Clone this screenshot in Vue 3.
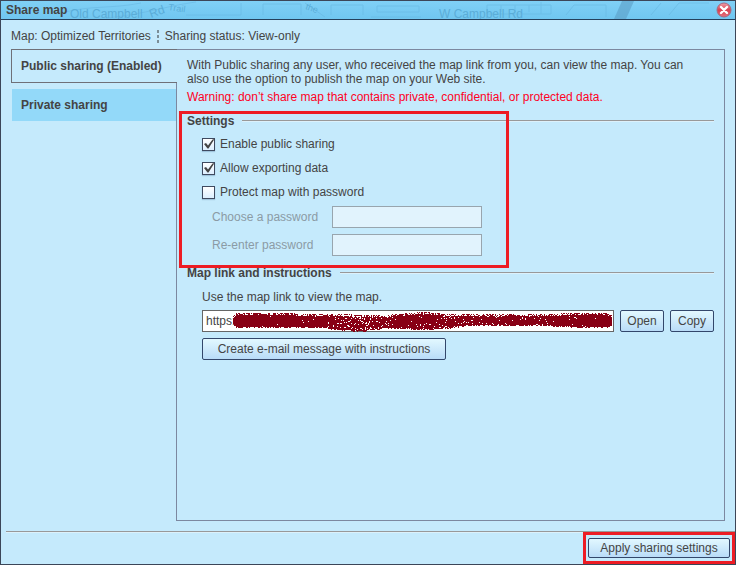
<template>
  <div class="dialog">
    <header class="title-bar">
      <svg class="map-strip" width="734" height="18" aria-hidden="true">
        <g class="map-roads">
          <path d="M60 12c30-8 50-4 80-10M105 17c40-4 60-12 90-16M185 14h55V2M262 14V3h38v11M330 14V4h32v10M370 16h50M486 13V4h64v9zM500 4v7M514 4v7M528 4v7M540 13V1" />
          <path d="M565 14l8-10h32v12M650 14l10-12M668 14l10-12h30M304 2l20 14M376 5h42v6h-42z" />
        </g>
        <path d="M621 0h12l-8 18h-12z" fill="#5b9fc6" opacity="0.6" />
        <g class="map-text">
          <text x="69" y="17">Old Campbell</text>
          <text x="150" y="17" transform="rotate(-20 150 17)">Rd</text>
          <text x="167" y="9" transform="rotate(8 167 9)" class="small">Trail</text>
          <text x="438" y="17">W Campbell Rd</text>
          <text x="304" y="8" transform="rotate(20 304 8)" class="small">the</text>
        </g>
      </svg>
      <h1>Share map</h1>
      <button class="close-btn" type="button" aria-label="Close">
        <svg width="16" height="16" viewBox="0 0 16 16">
          <defs>
            <linearGradient id="close-fill" x1="0" y1="0" x2="0" y2="1">
              <stop offset="0" stop-color="#f0a0a8" />
              <stop offset="0.5" stop-color="#d8404f" />
              <stop offset="1" stop-color="#e4707c" />
            </linearGradient>
          </defs>
          <circle cx="8" cy="8" r="7" fill="url(#close-fill)" stroke="#a8687e" />
          <path d="M5 5l6 6M11 5l-6 6" stroke="#fff" stroke-width="2.4" stroke-linecap="round" />
        </svg>
      </button>
    </header>

    <div class="status">
      <span>Map: Optimized Territories</span>
      <svg class="status-divider" width="2" height="14" aria-hidden="true">
        <path d="M1 1v3M1 6v3M1 11v3" stroke="#333" />
      </svg>
      <span>Sharing status: View-only</span>
    </div>

    <div class="body">
      <nav class="tabs">
        <button
          v-for="tab in tabs"
          :key="tab.id"
          type="button"
          class="tab"
          :class="{ active: tab.id === activeTab }"
          @click="activeTab = tab.id"
        >
          {{ tab.label }}
        </button>
      </nav>

      <main class="panel">
        <p class="intro">
          With Public sharing any user, who received the map link from you, can view the map. You can
          also use the option to publish the map on your Web site.
        </p>
        <p class="warning">
          Warning: don’t share map that contains private, confidential, or protected data.
        </p>

        <section class="settings">
          <h2>Settings</h2>
          <div class="options">
            <label v-for="option in options" :key="option.id" class="option">
              <span class="check">
                <input v-model="option.checked" type="checkbox" />
                <svg v-if="option.checked" width="13" height="13" viewBox="0 0 13 13" aria-hidden="true">
                  <path d="M2 6l2-1 2 2.5L10.5 1.5l2-.5L6.5 10.5H5.5z" fill="#444" />
                </svg>
              </span>
              <span>{{ option.label }}</span>
            </label>
          </div>
          <div class="passwords">
            <label for="password">Choose a password</label>
            <input id="password" type="password" disabled />
            <label for="password-again">Re-enter password</label>
            <input id="password-again" type="password" disabled />
          </div>
        </section>

        <section class="link-section">
          <h2>Map link and instructions</h2>
          <div class="link-body">
            <label for="map-link">Use the map link to view the map.</label>
            <div class="link-row">
              <div class="link-field">
                <input id="map-link" type="text" value="https:" readonly />
                <svg
                  class="scribble"
                  viewBox="0 0 380 22"
                  preserveAspectRatio="none"
                  shape-rendering="crispEdges"
                  aria-hidden="true"
                >
                  <path :d="spray" />
                </svg>
              </div>
              <button class="btn" type="button">Open</button>
              <button class="btn" type="button">Copy</button>
            </div>
            <button class="btn wide" type="button">Create e-mail message with instructions</button>
          </div>
        </section>
      </main>
    </div>

    <footer class="footer">
      <div class="apply">
        <button class="btn" type="button">Apply sharing settings</button>
      </div>
    </footer>
  </div>
</template>

<script setup>
import { ref } from "vue";

const activeTab = ref("public");
const tabs = [
  { id: "public", label: "Public sharing (Enabled)" },
  { id: "private", label: "Private sharing" },
];

const options = ref([
  { id: "enable", label: "Enable public sharing", checked: true },
  { id: "export", label: "Allow exporting data", checked: true },
  { id: "protect", label: "Protect map with password", checked: false },
]);

// x, top, bottom, density of the spray that hides the address
const outline = [
  [0, 6, 13, 1],
  [3, 3, 16, 1],
  [40, 3, 16, 0.99],
  [85, 4, 16, 0.98],
  [110, 4, 19, 0.9],
  [130, 5, 20, 0.8],
  [150, 5, 17, 0.88],
  [165, 4, 17, 1],
  [190, 2, 18, 0.95],
  [215, 4, 17, 0.9],
  [235, 4, 14, 0.95],
  [270, 4, 14, 0.96],
  [310, 4, 14, 0.98],
  [345, 3, 16, 0.98],
  [374, 3, 16, 1],
  [379, 6, 13, 1],
];

function buildSpray() {
  let seed = 7;
  const random = () => {
    seed = (seed * 16807) % 2147483647;
    return seed / 2147483647;
  };
  let d = "";
  for (let i = 0; i < outline.length - 1; i++) {
    const [x0, top0, bottom0, fill0] = outline[i];
    const [x1, top1, bottom1, fill1] = outline[i + 1];
    for (let x = x0; x < x1; x++) {
      const t = (x - x0) / (x1 - x0);
      const top = Math.round(top0 + (top1 - top0) * t);
      const bottom = Math.round(bottom0 + (bottom1 - bottom0) * t);
      const fill = fill0 + (fill1 - fill0) * t;
      for (let y = top - 1; y <= bottom; y++) {
        const edge = Math.min(y - top, bottom - y);
        if (random() < (edge < 1 ? fill * 0.55 : fill)) d += `M${x} ${y}h1v1h-1z`;
      }
    }
  }
  return d;
}

const spray = buildSpray();
</script>

<style>
body {
  margin: 0;
}
</style>

<style scoped>
.dialog {
  display: flex;
  flex-direction: column;
  box-sizing: border-box;
  min-height: 100vh;
  border: 1px solid #3c4658;
  background: #c5eafc;
  color: #444;
  font: 12px/14px "Liberation Sans", Arial, sans-serif;
}
button,
input {
  box-sizing: border-box;
  margin: 0;
  color: inherit;
  font: inherit;
}
h1,
h2,
p {
  margin: 0;
  font-size: 12px;
}
.title-bar {
  position: relative;
  display: flex;
  align-items: center;
  justify-content: space-between;
  height: 18px;
  padding: 0 3px 0 5px;
  overflow: hidden;
  border-bottom: 1px solid #24405c;
  background: linear-gradient(#80d0f6, #70c6f0);
}
.map-strip {
  position: absolute;
  top: 0;
  left: 0;
}
.map-roads {
  fill: none;
  stroke: #69b8e2;
  opacity: 0.6;
}
.map-text {
  fill: #5badd8;
  font-size: 12px;
}
.map-text .small {
  font-size: 9px;
}
.title-bar h1,
.close-btn {
  position: relative;
}
.close-btn {
  width: 16px;
  height: 16px;
  padding: 0;
  border: 0;
  background: none;
}
.close-btn svg {
  display: block;
}
.status {
  display: flex;
  align-items: center;
  gap: 6px;
  padding: 9px 10px 6px;
}
.body {
  display: flex;
  flex: 1;
  padding: 0 10px;
}
.tabs {
  z-index: 1;
  display: flex;
  flex-direction: column;
  gap: 6px;
  width: 166px;
  margin-right: -1px;
}
.tab {
  height: 32px;
  margin: 0 1px;
  padding: 0 9px;
  border: 0;
  background: #93d9f9;
  font-weight: bold;
  text-align: left;
}
.tab.active {
  height: 34px;
  margin: 0;
  border: 1px solid #6f7078;
  border-right: 0;
  background: #c5eafc;
}
.panel {
  flex: 1;
  padding: 8px 10px;
  border: 1px solid #7c88a0;
}
.intro {
  padding-right: 20px;
}
.warning {
  margin-top: 4px;
  color: #ff0024;
}
h2 {
  display: flex;
  align-items: center;
  gap: 8px;
}
h2::after {
  flex: 1;
  height: 1px;
  border-top: 1px solid #999;
  background: #dcf1fb;
  content: "";
}
.settings {
  position: relative;
  margin-top: 10px;
}
.settings::before {
  position: absolute;
  top: -3px;
  left: -8px;
  box-sizing: border-box;
  width: 330px;
  height: 157px;
  border: 3px solid #ed1c24;
  content: "";
  pointer-events: none;
}
.options {
  padding: 4px 15px 0;
}
.option {
  display: flex;
  align-items: center;
  gap: 5px;
  height: 24px;
}
.check {
  position: relative;
  width: 13px;
  height: 13px;
}
.check input {
  display: block;
  width: 13px;
  height: 13px;
  border: 1px solid #3f4a60;
  background: linear-gradient(#fff, #dcefff);
  box-shadow: 0 1px 1px #9fc4dc;
  appearance: none;
}
.check svg {
  position: absolute;
  top: 0;
  left: 0;
  pointer-events: none;
}
.passwords {
  display: grid;
  grid-template-columns: 120px 150px;
  row-gap: 6px;
  align-items: center;
  padding: 2px 25px 0;
  color: #8b9ba5;
}
.passwords input {
  height: 22px;
  border: 1px solid #98a5ae;
  background: #e1f3fd;
}
.link-section {
  margin-top: 10px;
}
.link-body {
  display: flex;
  flex-direction: column;
  align-items: flex-start;
  gap: 6px;
  padding: 10px 0 0 15px;
}
.link-row {
  display: flex;
  align-self: stretch;
  gap: 6px;
}
.link-field {
  position: relative;
  flex: 1;
}
.link-field input {
  display: block;
  width: 100%;
  height: 22px;
  padding: 0 3px;
  border: 1px solid #666;
  background: #fff;
}
.scribble {
  position: absolute;
  top: 1px;
  left: 31px;
  width: calc(100% - 32px);
  height: 22px;
  fill: #880015;
  pointer-events: none;
}
.btn {
  height: 22px;
  padding: 0 10px;
  border: 1px solid #33476b;
  border-radius: 2px;
  background: linear-gradient(#e2f8ff, #b9dcf8);
}
.link-row .btn {
  width: 44px;
  padding: 0;
}
.btn.wide {
  min-width: 244px;
}
.footer {
  display: flex;
  justify-content: flex-end;
  margin: 10px 0 0 5px;
  border-top: 1px solid #999;
  box-shadow: inset 0 1px #dcf1fb;
}
.apply {
  padding: 3px 2px;
  border: 3px solid #ed1c24;
}
.apply .btn {
  display: block;
  min-width: 142px;
  height: 20px;
}
</style>
